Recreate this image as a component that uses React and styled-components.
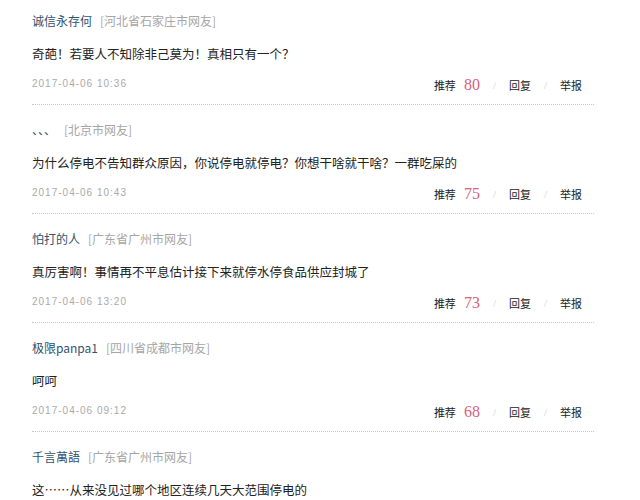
import styled, { createGlobalStyle } from 'styled-components';

const comments = [
  { name: '诚信永存何', from: '河北省石家庄市网友', text: '奇葩！若要人不知除非己莫为！真相只有一个？', time: '2017-04-06 10:36', likes: 80 },
  { name: '、、、', from: '北京市网友', text: '为什么停电不告知群众原因，你说停电就停电？你想干啥就干啥？一群吃屎的', time: '2017-04-06 10:43', likes: 75 },
  { name: '怕打的人', from: '广东省广州市网友', text: '真厉害啊！事情再不平息估计接下来就停水停食品供应封城了', time: '2017-04-06 13:20', likes: 73 },
  { name: '极限panpa1', from: '四川省成都市网友', text: '呵呵', time: '2017-04-06 09:12', likes: 68 },
  { name: '千言萬語', from: '广东省广州市网友', text: '这……从来没见过哪个地区连续几天大范围停电的' },
];

export default function App() {
  return (
    <>
      <GlobalStyle />
      <List>
        {comments.map((c) => (
          <Comment key={c.name}>
            <Header>
              <Name>{c.name}</Name>
              <From>[{c.from}]</From>
            </Header>
            <Body>{c.text}</Body>
            {c.time && (
              <Meta>
                <Time>{c.time}</Time>
                <Actions>
                  <Action>推荐</Action>
                  <Count>{c.likes}</Count>
                  <Sep>/</Sep>
                  <Action>回复</Action>
                  <Sep>/</Sep>
                  <Action>举报</Action>
                </Actions>
              </Meta>
            )}
          </Comment>
        ))}
      </List>
    </>
  );
}

const GlobalStyle = createGlobalStyle`
  html, body {
    margin: 0;
    background: #fff;
    overflow: hidden;
  }
  body {
    font-family: "Noto Sans CJK SC", "Liberation Sans", sans-serif;
  }
`;

const List = styled.div`
  width: 562px;
  padding-left: 32px;
`;

const Comment = styled.div`
  padding: 17px 0 13px;
  border-bottom: 1px dotted #c8c8c8;

  &:first-child {
    padding-top: 13px;
  }

  &:last-child {
    border-bottom: none;
  }
`;

const Header = styled.div`
  display: flex;
  align-items: center;
  gap: 8px;
  height: 16px;
`;

const Name = styled.span`
  font-family: "Noto Sans CJK SC", "Liberation Mono", monospace;
  font-size: 12px;
  color: #32536f;
  line-height: 16px;
`;

const From = styled.span`
  font-size: 12px;
  color: #a6a6a6;
  line-height: 16px;
`;

const Body = styled.p`
  margin: 15px 0 0;
  font-size: 12.5px;
  line-height: 20px;
  color: #222;
`;

const Meta = styled.div`
  display: flex;
  justify-content: space-between;
  align-items: center;
  margin-top: 11px;
  height: 16px;
`;

const Time = styled.span`
  font-family: "Liberation Sans", sans-serif;
  font-size: 10px;
  letter-spacing: 1px;
  color: #aaa;
`;

const Actions = styled.div`
  display: flex;
  align-items: center;
  padding-right: 12px;
  margin-top: 4px;
`;

const Action = styled.span`
  font-size: 11px;
  color: #222;
  line-height: 16px;
`;

const Count = styled.span`
  font-family: "Liberation Serif", serif;
  font-size: 16px;
  color: #d9607d;
  margin-left: 8px;
  line-height: 16px;
`;

const Sep = styled.span`
  font-family: "Liberation Serif", serif;
  font-size: 11px;
  color: #d0d0d0;
  margin: 0 13px;
`;
